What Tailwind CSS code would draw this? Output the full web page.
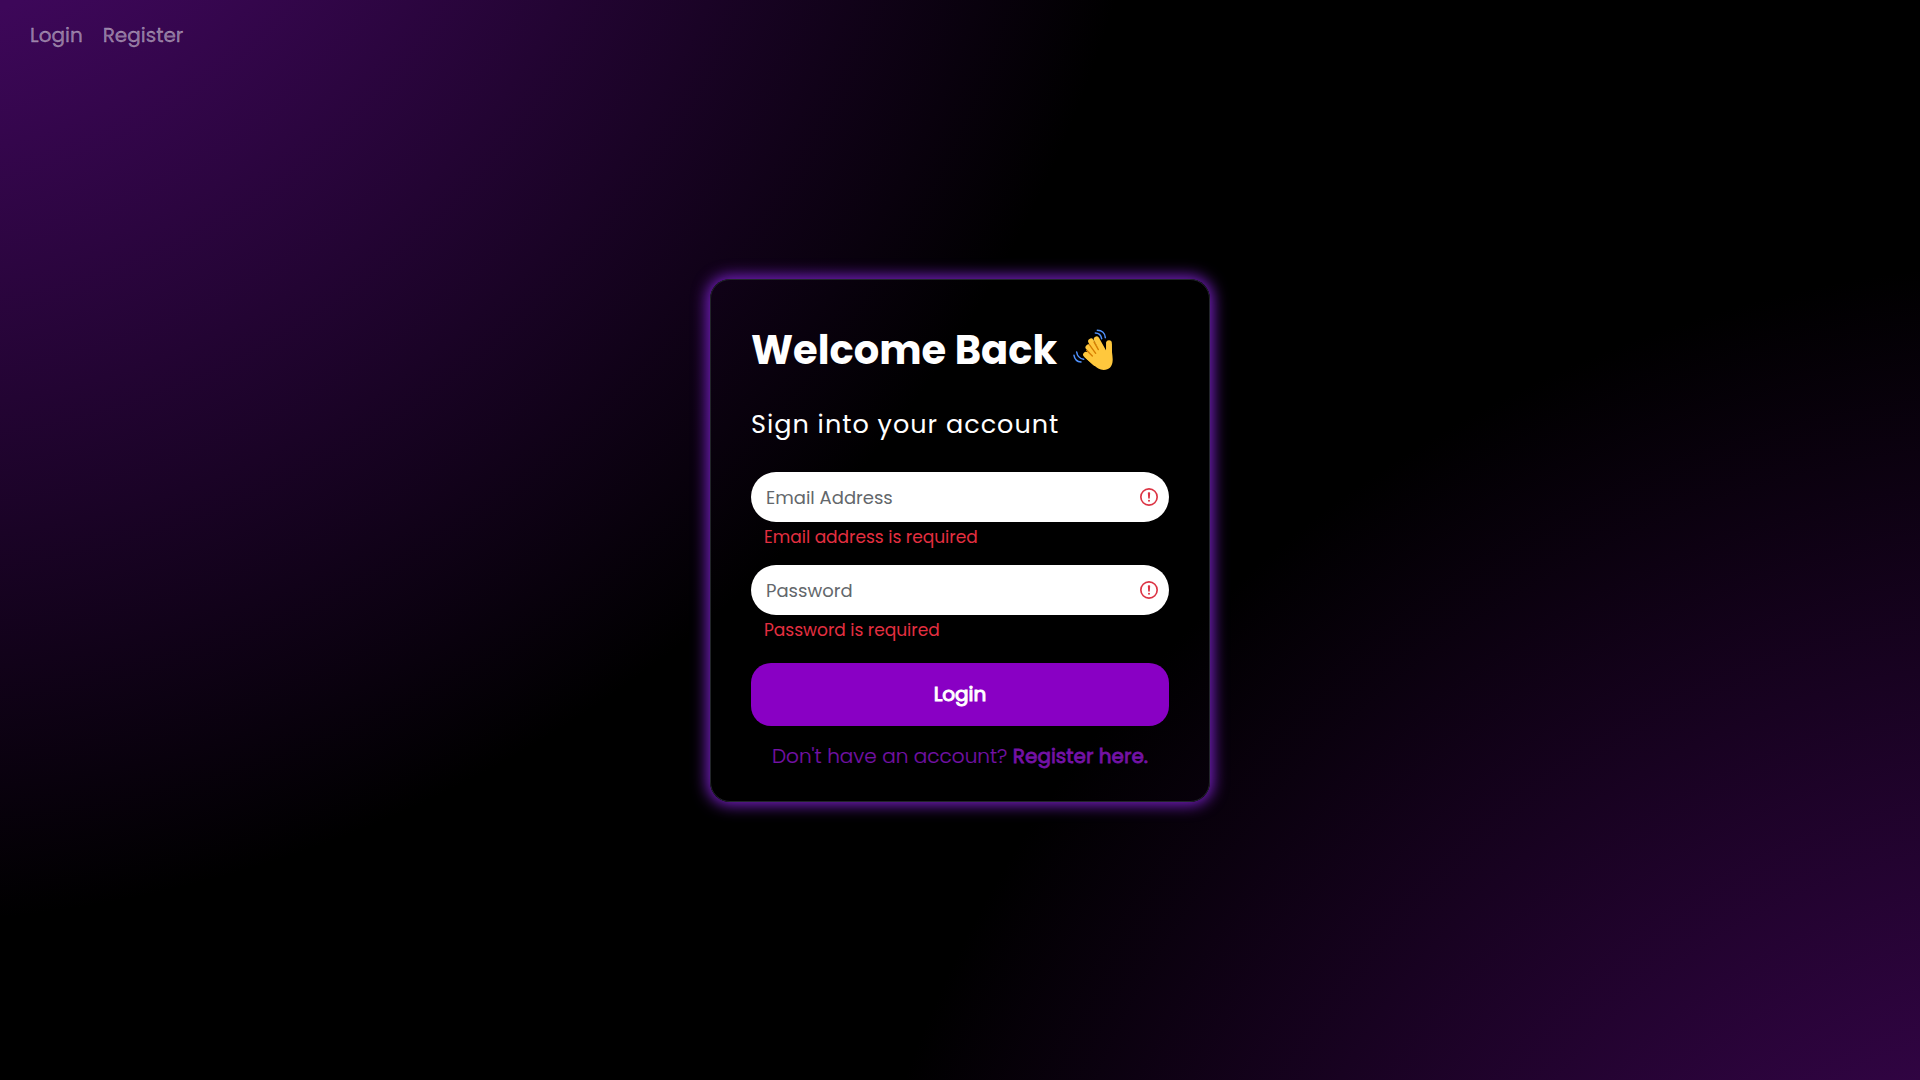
<!DOCTYPE html>
<html lang="en">
<head>
<meta charset="utf-8">
<title>Login</title>
<script src="https://cdn.jsdelivr.net/npm/@tailwindcss/browser@4"></script>
</head>
<body class="h-screen overflow-hidden bg-black bg-[radial-gradient(circle_at_-120px_-365px,#3d0759_392px,transparent_1289px),radial-gradient(circle_at_2070px_1500px,#300442_446px,transparent_1240px)] font-['Poppins','Open_Sans',sans-serif]">
<div class="flex h-full flex-col">
  <nav class="flex h-[70px] items-center gap-5 px-[30px] text-[20px] leading-[30px] text-white/45 [-webkit-text-stroke:0.3px]">
    <a class="whitespace-nowrap">Login</a><a class="whitespace-nowrap">Register</a>
  </nav>
  <main class="flex justify-center pt-[209px]">
    <section class="flex h-[523px] w-[500px] flex-col rounded-[20px] border border-[#212529] px-[40px] shadow-[0_0_15px_3px_#7a20c8]">
      <h1 class="mt-[40px] flex h-[60px] items-center gap-[15px] whitespace-nowrap text-[40px] font-bold text-white">Welcome Back
        <svg class="mb-[2px] h-[43px] w-[42px]" viewBox="36 24 126 129" fill="none" stroke-linecap="round" stroke-linejoin="round">
          <g stroke="#ffc83d" stroke-width="17"><path d="M110 58l20 36"/><path d="M93 64l26 40"/><path d="M85 82l26 32"/><path d="M78 104l27 25"/><path d="M147 69l1 50" /></g>
          <path fill="#ffc83d" d="M104 84L128 88L138 92L139 66L155 72C154 92 158 105 158 120C158 140 147 150 131 150C119 150 110 144 102 136L74 112L86 88z"/>
          <g stroke="#d67d00" stroke-width="4"><path d="M102 66l13 23"/><path d="M88 74l19 26"/><path d="M80 91l17 17"/></g>
          <g stroke="#5092ff" stroke-width="4.5"><path d="M106 39c10 0 17 7 19 17"/><path d="M112 31c14 0 23 9 24 22"/><path d="M50 96c2 13 9 20 21 22"/><path d="M42 106c2 12 9 19 21 20"/></g>
        </svg>
      </h1>
      <p class="mt-[24px] flex h-[40px] items-center whitespace-nowrap text-[25.5px] tracking-[1px] text-white">Sign into your account</p>
      <div class="mt-[28px] flex h-[50px] shrink-0 items-center justify-between rounded-full bg-white pr-[10.5px] pl-[15px]">
        <span class="pt-px text-[18px] text-[#63676b]">Email Address</span>
        <svg class="size-[20px]" viewBox="0 0 12 12" fill="none" stroke="#dc3545"><circle cx="6" cy="6" r="4.9" stroke-width="1"/><path stroke-linejoin="round" d="M5.8 3.6h.4L6 6.5z"/><circle cx="6" cy="8.2" r=".6" fill="#dc3545" stroke="none"/></svg>
      </div>
      <p class="ml-[13px] flex h-[30px] items-center pt-[2px] text-[17px] text-[#e42f40]">Email address is required</p>
      <div class="mt-[13px] flex h-[50px] shrink-0 items-center justify-between rounded-full bg-white pr-[10.5px] pl-[15px]">
        <span class="pt-px text-[18px] text-[#63676b]">Password</span>
        <svg class="size-[20px]" viewBox="0 0 12 12" fill="none" stroke="#dc3545"><circle cx="6" cy="6" r="4.9" stroke-width="1"/><path stroke-linejoin="round" d="M5.8 3.6h.4L6 6.5z"/><circle cx="6" cy="8.2" r=".6" fill="#dc3545" stroke="none"/></svg>
      </div>
      <p class="ml-[13px] flex h-[30px] items-center pt-[2px] text-[17px] text-[#e42f40]">Password is required</p>
      <button class="mt-[18px] h-[63px] shrink-0 rounded-[20px] bg-[#8900c4] pb-[2px] text-[20px] text-white [-webkit-text-stroke:1px]">Login</button>
      <p class="mt-[15px] whitespace-nowrap text-center text-[20px] font-light leading-[30px] text-[#7412a6] [-webkit-text-stroke:0.2px]">Don't have an account? <a class="font-normal [-webkit-text-stroke:0.8px]">Register here.</a></p>
    </section>
  </main>
</div>
</body>
</html>
